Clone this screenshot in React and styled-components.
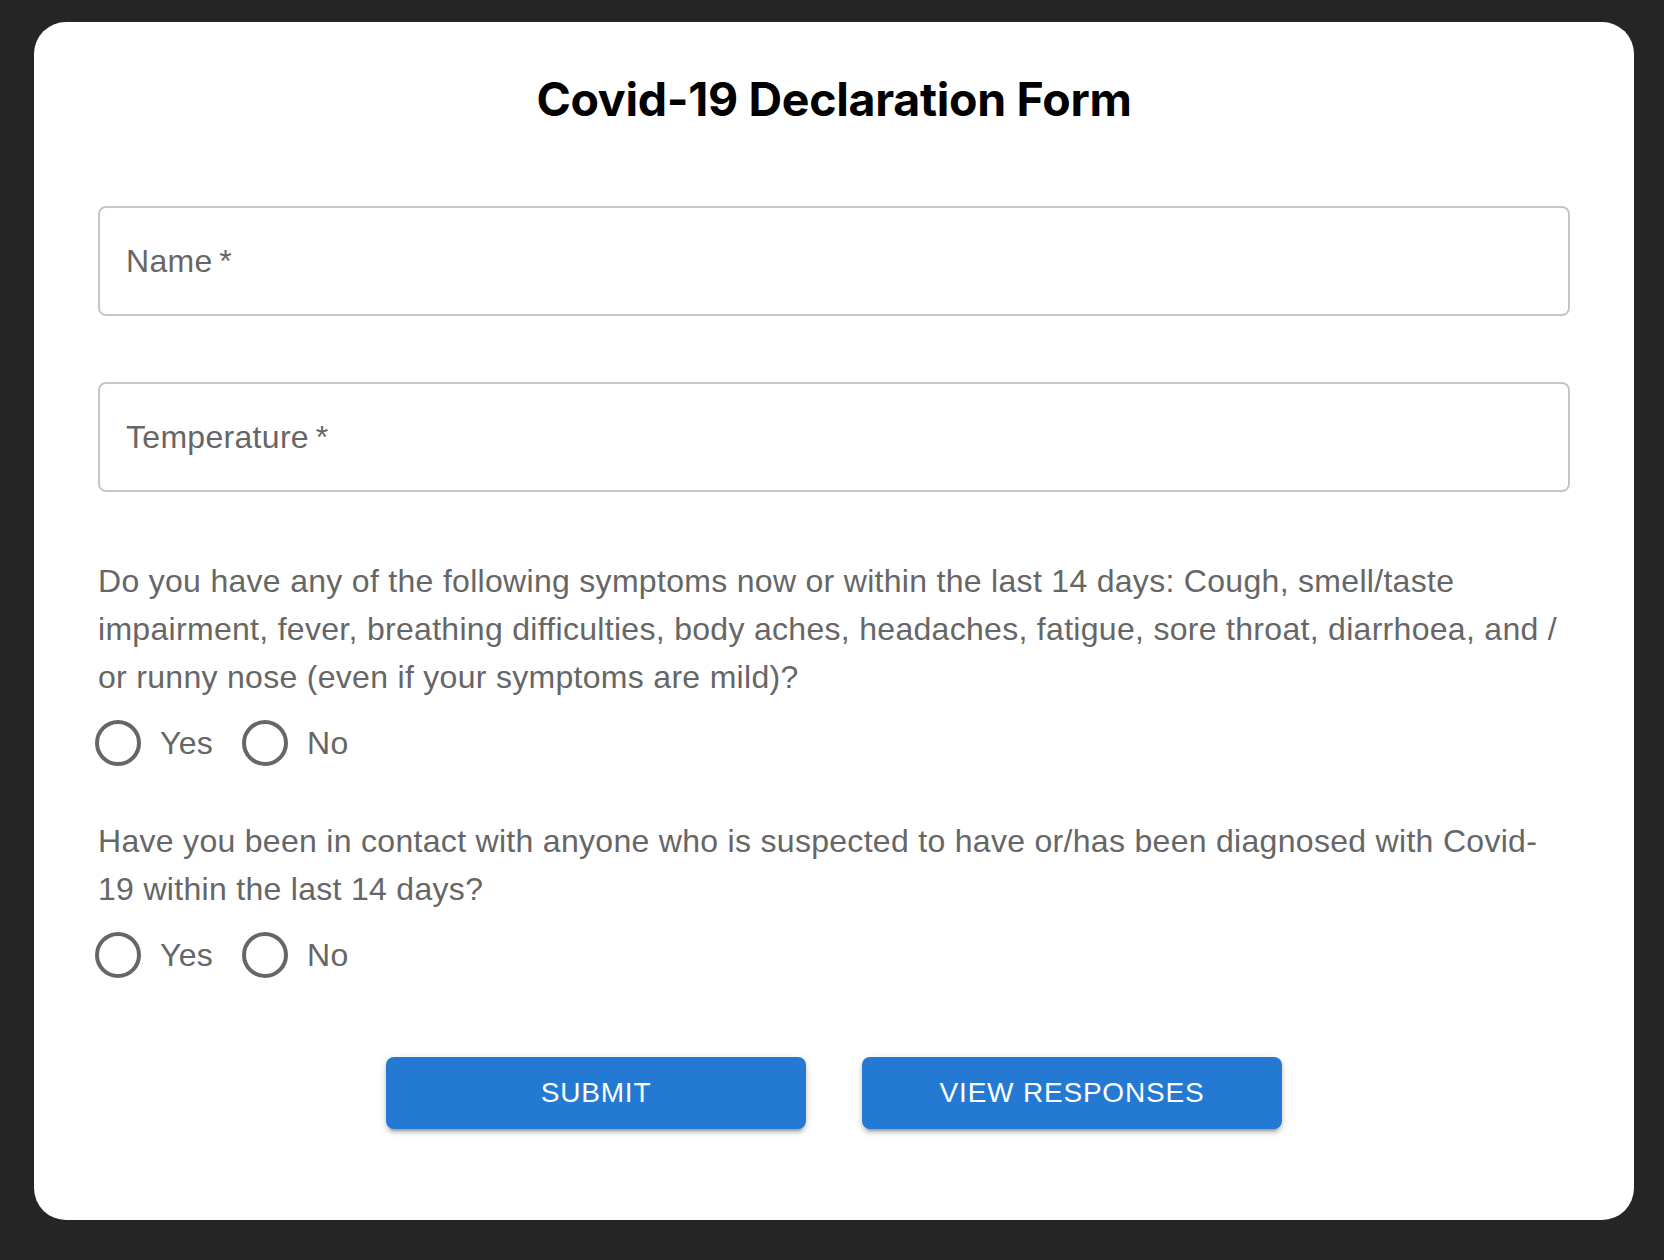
import React from 'react'
import styled, { createGlobalStyle } from 'styled-components'

const GlobalStyle = createGlobalStyle`
    html, body {
        margin: 0;
        padding: 0;
        background-color: #252525;
    }
    * {
        box-sizing: border-box;
    }
`

const Page = styled.div`
    min-height: 1260px;
    padding: 22px 30px 40px 34px;
    font-family: 'Liberation Sans', Helvetica, Arial, sans-serif;
`

const Card = styled.form`
    width: 1600px;
    background-color: #ffffff;
    border-radius: 32px;
    padding: 51px 64px 91px;
    display: flex;
    flex-direction: column;
`

const Title = styled.h1`
    margin: 0;
    font-family: 'Inter', 'Liberation Sans', sans-serif;
    font-weight: 700;
    font-size: 46.5px;
    line-height: 52px;
    letter-spacing: -0.3px;
    text-align: center;
    color: #000000;
`

const Field = styled.label`
    display: flex;
    align-items: center;
    height: 110px;
    margin-top: ${(props) => props.top}px;
    padding: 0 26px;
    border: 2px solid #c6c6c6;
    border-radius: 8px;
    font-size: 32px;
    letter-spacing: 0.3px;
    color: #666666;
    cursor: text;
`

const Question = styled.p`
    margin: ${(props) => props.top}px 0 0;
    font-size: 32px;
    line-height: 48px;
    letter-spacing: 0.3px;
    color: #666666;
`

const RadioRow = styled.div`
    display: flex;
    align-items: center;
    height: 84px;
`

const RadioItem = styled.label`
    display: flex;
    align-items: center;
    margin: 0 32px 0 -22px;
    font-size: 32px;
    letter-spacing: 0.3px;
    color: #666666;
    cursor: pointer;
`

const RadioIcon = styled.span`
    display: flex;
    align-items: center;
    justify-content: center;
    width: 84px;
    height: 84px;
    padding: 18px;

    &::before {
        content: '';
        display: block;
        width: 38px;
        height: 38px;
        border: 4px solid #666666;
        border-radius: 50%;
    }
`

const Actions = styled.div`
    display: flex;
    justify-content: center;
    gap: 56px;
    margin-top: 60px;
`

const Button = styled.button`
    width: 420px;
    height: 72px;
    border: none;
    border-radius: 8px;
    background-color: #2479d3;
    color: #ffffff;
    font-family: 'Liberation Sans', Helvetica, Arial, sans-serif;
    font-size: 28px;
    letter-spacing: 0.8px;
    text-transform: uppercase;
    cursor: pointer;
    box-shadow: 0 6px 2px -4px rgba(0, 0, 0, 0.2), 0 4px 4px 0 rgba(0, 0, 0, 0.14),
        0 2px 10px 0 rgba(0, 0, 0, 0.12);
`

const YesNo = () => (
    <RadioRow>
        <RadioItem>
            <RadioIcon />
            Yes
        </RadioItem>
        <RadioItem>
            <RadioIcon />
            No
        </RadioItem>
    </RadioRow>
)

const App = () => {
    return (
        <Page>
            <GlobalStyle />
            <Card onSubmit={(e) => e.preventDefault()}>
                <Title>Covid-19 Declaration Form</Title>
                <Field top={81}>Name{'\u2009'}*</Field>
                <Field top={66}>Temperature{'\u2009'}*</Field>
                <Question top={65}>
                    Do you have any of the following symptoms now or within the
                    last 14 days: Cough, smell/taste impairment, fever, breathing
                    difficulties, body aches, headaches, fatigue, sore throat,
                    diarrhoea, and / or runny nose (even if your symptoms are
                    mild)?
                </Question>
                <YesNo />
                <Question top={32}>
                    Have you been in contact with anyone who is suspected to have
                    or/has been diagnosed with Covid-19 within the last 14 days?
                </Question>
                <YesNo />
                <Actions>
                    <Button type="submit">Submit</Button>
                    <Button type="button">View Responses</Button>
                </Actions>
            </Card>
        </Page>
    )
}

export default App
